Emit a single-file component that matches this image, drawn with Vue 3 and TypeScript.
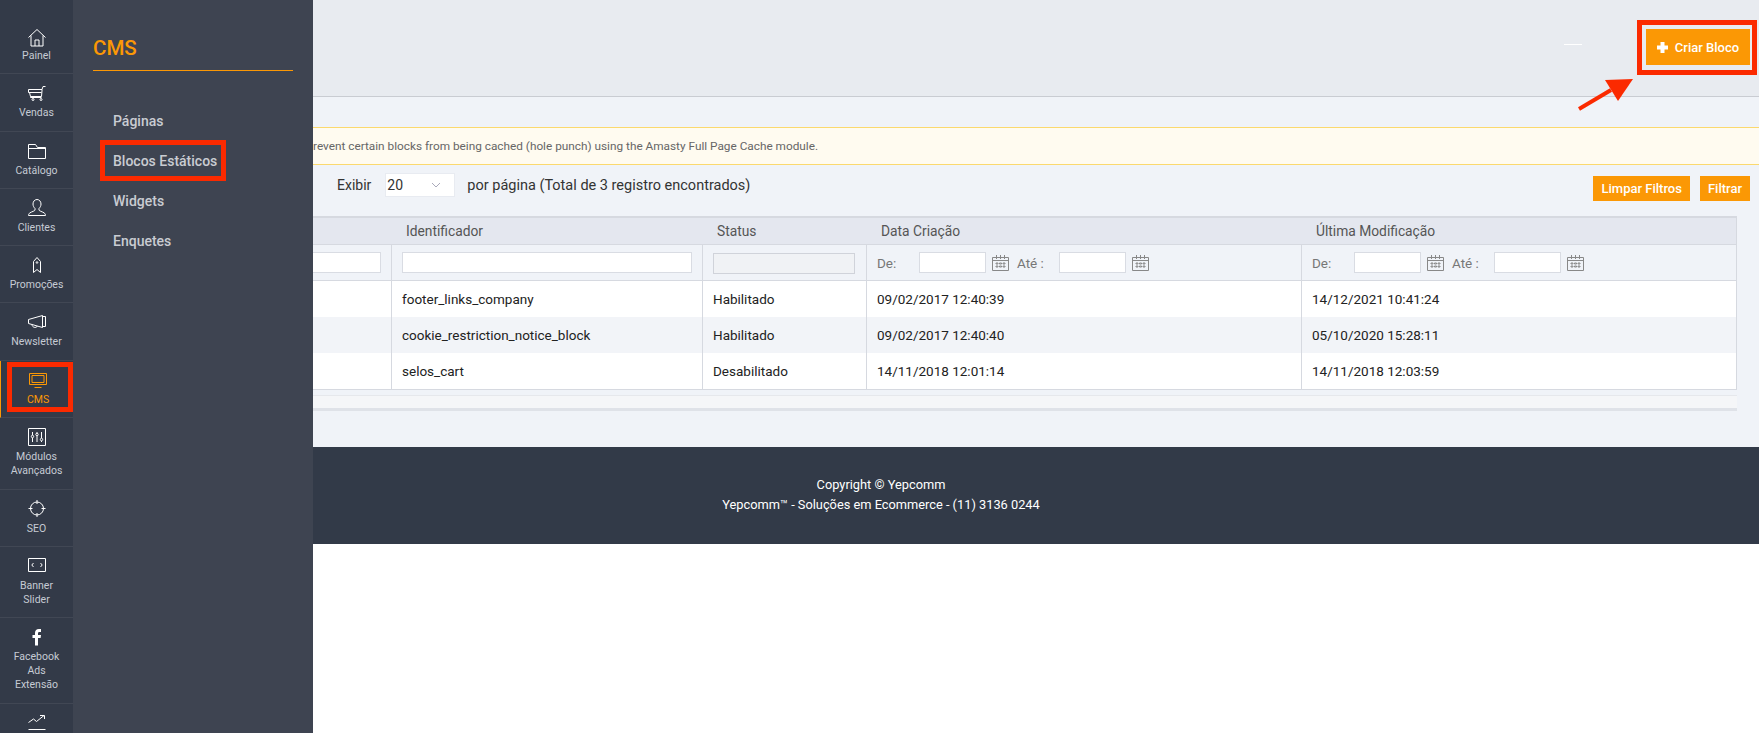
<template>
  <div class="page">
    <nav class="rail">
      <a v-for="item in railItems" :key="item.name" class="rail-item" :class="{ first: item.first, active: item.active, tall: item.tall }">
        <svg class="rail-icon" viewBox="0 0 20 20" width="20" height="20">
          <path :d="item.icon" :class="{ solid: item.solid }" />
        </svg>
        <span v-for="line in item.lines" :key="line" class="rail-label">{{ line }}</span>
      </a>
    </nav>

    <aside class="flyout">
      <h2 class="flyout-title">CMS</h2>
      <ul class="flyout-menu">
        <li v-for="m in menu" :key="m" :class="{ marked: m === 'Blocos Estáticos' }">{{ m }}</li>
      </ul>
    </aside>

    <main class="main">
      <section class="content">
        <header class="topbar">
          <span class="stub"></span>
          <button class="btn-create">
            <svg viewBox="0 0 11 11" width="11" height="11"><path d="M3.500 0h4v3.500H11v4H7.500V11h-4V7.500H0v-4h3.500z" /></svg>
            Criar Bloco
            <svg class="arrow" viewBox="0 0 56 33" width="56" height="33">
              <path class="arrow-line" d="M1 31 33 12" />
              <path class="arrow-head" d="M55 1 27 2 40 23z" />
            </svg>
          </button>
        </header>

        <div class="notice">revent certain blocks from being cached (hole punch) using the Amasty Full Page Cache module.</div>

        <div class="toolbar">
          <div class="pager">
            <span>Exibir</span>
            <div class="select">
              <span>20</span>
              <svg viewBox="0 0 10 6" width="10" height="6"><path d="M1 1l4 4 4-4" /></svg>
            </div>
            <span class="total">por página (Total de 3 registro encontrados)</span>
          </div>
          <div class="actions">
            <button class="btn">Limpar Filtros</button>
            <button class="btn">Filtrar</button>
          </div>
        </div>

        <table class="grid">
          <colgroup>
            <col style="width: 78px" />
            <col style="width: 311px" />
            <col style="width: 164px" />
            <col style="width: 435px" />
            <col />
          </colgroup>
          <thead>
            <tr class="heads">
              <th></th>
              <th>Identificador</th>
              <th>Status</th>
              <th>Data Criação</th>
              <th>Última Modificação</th>
            </tr>
            <tr class="filters">
              <td><input class="first-input" type="text" /></td>
              <td><input class="wide" type="text" /></td>
              <td><input class="wide off" type="text" disabled /></td>
              <td v-for="n in 2" :key="n">
                <div class="range">
                  <span class="de">De:</span>
                  <input class="date" type="text" />
                  <svg class="cal" viewBox="0 0 17 17" width="17" height="17"><path :d="calendar" /></svg>
                  <span class="ate">Até :</span>
                  <input class="date" type="text" />
                  <svg class="cal" viewBox="0 0 17 17" width="17" height="17"><path :d="calendar" /></svg>
                </div>
              </td>
            </tr>
          </thead>
          <tbody>
            <tr v-for="r in rows" :key="r.id" class="row">
              <td></td>
              <td>{{ r.id }}</td>
              <td>{{ r.status }}</td>
              <td>{{ r.created }}</td>
              <td>{{ r.updated }}</td>
            </tr>
          </tbody>
        </table>
        <div class="strip"></div>
      </section>

      <footer class="footer">
        <div>Copyright © Yepcomm</div>
        <div>Yepcomm™ - Soluções em Ecommerce - (11) 3136 0244</div>
      </footer>
    </main>
  </div>
</template>

<script setup lang="ts">
type RailItem = {
  name: string
  lines: string[]
  icon: string
  first?: boolean
  active?: boolean
  solid?: boolean
  tall?: boolean
}

const railItems: RailItem[] = [
  {
    name: 'painel',
    lines: ['Painel'],
    first: true,
    icon: 'M1.500 10.500 10 2.500l8.500 8M4 8.500v10.500h12V8.500M8 19v-6h4v6',
  },
  {
    name: 'vendas',
    lines: ['Vendas'],
    tall: true,
    icon: 'M18.500 2.500H16l-1 3H1.500v3h13M2.500 8.500l1 4h11l.6-7M3.500 12.500v1h11M7 15.500a1 1 0 1 1-2 0 1 1 0 0 1 2 0zM15 15.500a1 1 0 1 1-2 0 1 1 0 0 1 2 0z',
  },
  {
    name: 'catalogo',
    lines: ['Catálogo'],
    icon: 'M1.500 16.500v-14h7l2 3h8v11zM1.500 6.500h17',
  },
  {
    name: 'clientes',
    lines: ['Clientes'],
    icon: 'M10 .5c2.300 0 4 2 4 4.500 0 2-1 3.500-2 4.500v1.500c0 1 3 1.500 5 2.800 1 .7 1.500 1.500 1.500 2.700h-17c0-1.200.5-2 1.500-2.700 2-1.300 5-1.800 5-2.800V9.500c-1-1-2-2.500-2-4.500C6 2.500 7.700.5 10 .5z',
  },
  {
    name: 'promocoes',
    lines: ['Promoções'],
    icon: 'M6.500 5.500 10 1.500l3.500 4v11L10 13.500l-3.500 3zM10.800 6.500a.8.8 0 1 1-1.600 0 .8.8 0 0 1 1.600 0z',
  },
  {
    name: 'newsletter',
    lines: ['Newsletter'],
    tall: true,
    icon: 'M1.500 6.500l14-4v12l-14-4zM15.500 3.500h3v10h-3M5 11.500c0 3 4 4 5.500 1.500',
  },
  {
    name: 'cms',
    lines: ['CMS'],
    active: true,
    icon: 'M1.500 2.500h17v11h-17zM4 4.500h12v7H4zM6.500 16.500h7',
  },
  {
    name: 'modulos',
    lines: ['Módulos', 'Avançados'],
    tall: true,
    icon: 'M1.500.5h17v17h-17zM5.500 4v3M5.500 10v4M10 4v1M10 8v6M14.500 4v6M14.500 13v1M6.700 8.500a1.200 1.200 0 1 1-2.400 0 1.200 1.200 0 0 1 2.400 0zM11.200 6.500a1.200 1.200 0 1 1-2.400 0 1.200 1.200 0 0 1 2.400 0zM15.700 11.500a1.200 1.200 0 1 1-2.400 0 1.200 1.200 0 0 1 2.400 0z',
  },
  {
    name: 'seo',
    lines: ['SEO'],
    icon: 'M16.500 8.500a6.500 6.500 0 1 1-13 0 6.500 6.500 0 0 1 13 0zM10 0v4M10 13v4M1.500 8.500h4M14.500 8.500h4',
  },
  {
    name: 'banner',
    lines: ['Banner', 'Slider'],
    icon: 'M1.500 1.500h17v13h-17zM6.500 6 4.800 8l1.700 2M13.500 6l1.700 2-1.700 2',
  },
  {
    name: 'facebook',
    lines: ['Facebook', 'Ads', 'Extensão'],
    solid: true,
    tall: true,
    icon: 'M8 17.500V10H5.500V7H8V5c0-2.700 1.600-4 3.800-4 1 0 1.900.1 2.200.1V4h-1.600C11.300 4 11 4.600 11 5.500V7h3l-.4 3H11v7.500z',
  },
  {
    name: 'relatorios',
    lines: [],
    icon: 'M1.500 8.500 6.500 5l3 2.500L17 1.500M13 1.500h4.500V5M1.500 15.500h17',
  },
]

const menu = ['Páginas', 'Blocos Estáticos', 'Widgets', 'Enquetes']

const rows = [
  { id: 'footer_links_company', status: 'Habilitado', created: '09/02/2017 12:40:39', updated: '14/12/2021 10:41:24' },
  { id: 'cookie_restriction_notice_block', status: 'Habilitado', created: '09/02/2017 12:40:40', updated: '05/10/2020 15:28:11' },
  { id: 'selos_cart', status: 'Desabilitado', created: '14/11/2018 12:01:14', updated: '14/11/2018 12:03:59' },
]

const calendar =
  'M.5 3.500h16v13H.5zM.5 6.500h16M4.500 1v4M8.500 1v4M12.500 1v4M4 9h2v1H4zM7.500 9h2v1h-2zM11 9h2v1h-2zM4 12h2v1H4zM7.500 12h2v1h-2zM11 12h2v1h-2z'
</script>

<style>
html,
body {
  margin: 0;
  background: #fff;
}
</style>

<style scoped>
.page {
  display: flex;
  height: 733px;
  overflow: hidden;
  font-family: Roboto, "Liberation Sans", sans-serif;
  font-size: 13px;
  background: #fff;
}

/* left icon rail */
.rail {
  width: 73px;
  flex: none;
  background: #333a48;
  display: flex;
  flex-direction: column;
}
.rail-item {
  position: relative;
  flex: none;
  display: flex;
  flex-direction: column;
  align-items: center;
  padding: 10px 0 10px;
  border-bottom: 1px solid #414754;
  color: #c6cbd4;
  font-size: 10.5px;
  line-height: 14px;
}
.rail-item.first {
  padding-top: 27px;
}
.rail-item.tall {
  padding-bottom: 11px;
}
.rail-icon {
  display: block;
  margin-bottom: 2px;
}
.rail-icon path {
  fill: none;
  stroke: #fff;
  stroke-width: 1;
}
.rail-icon path.solid {
  fill: #fff;
  stroke: none;
}
.rail-label {
  display: block;
  white-space: nowrap;
}
.rail-item.active {
  color: #fb9805;
  padding-left: 2px;
  border-left: 1px solid #fb9805;
}
.rail-item.active .rail-icon path {
  stroke: #fb9805;
}
.rail-item.active::after {
  content: "";
  position: absolute;
  left: 6px;
  right: 0;
  top: 1px;
  height: 50px;
  box-sizing: border-box;
  border: 5px solid #fb2a00;
}

/* flyout */
.flyout {
  width: 240px;
  flex: none;
  box-sizing: border-box;
  padding: 0 20px;
  background: #3e4451;
}
.flyout-title {
  margin: 0;
  height: 70px;
  border-bottom: 1px solid #fb9805;
  color: #fb9805;
  font-size: 20.5px;
  font-weight: 500;
  line-height: 96px;
}
.flyout-menu {
  list-style: none;
  margin: 30px 0 0;
  padding: 0 0 0 20px;
  color: #c9ccd2;
  font-size: 14px;
  font-weight: 500;
}
.flyout-menu li {
  position: relative;
  height: 40px;
  line-height: 40px;
}
.flyout-menu li.marked::after {
  content: "";
  position: absolute;
  left: -13px;
  top: -1px;
  width: 126px;
  height: 41px;
  box-sizing: border-box;
  border: 5px solid #fb2a00;
}

/* main column */
.main {
  flex: 1;
  min-width: 0;
  background: #fff;
  display: flex;
  flex-direction: column;
}
.content {
  height: 447px;
  flex: none;
  background: #f0f3f8;
  display: flex;
  flex-direction: column;
}
.topbar {
  height: 96px;
  flex: none;
  background: #e8ebf0;
  border-bottom: 1px solid #c9ccd2;
  display: flex;
  justify-content: flex-end;
  align-items: flex-start;
  padding-right: 9px;
}
.stub {
  width: 18px;
  height: 1px;
  margin: 44px 64px 0 0;
  background: #fff;
}
.btn-create {
  position: relative;
  margin-top: 29px;
  width: 104px;
  height: 36px;
  border: 0;
  padding: 0;
  background: #fb9805;
  color: #fff;
  font: 500 13px Roboto, sans-serif;
  display: flex;
  align-items: center;
  justify-content: center;
  gap: 7px;
}
.btn-create svg path {
  fill: #fff;
}
.btn-create::after {
  content: "";
  position: absolute;
  left: -9px;
  right: -7px;
  top: -9px;
  bottom: -10px;
  border: 5px solid #fb2a00;
}
.arrow {
  position: absolute;
  left: -68px;
  top: 49px;
  z-index: 1;
}
.btn-create svg.arrow path.arrow-line {
  fill: none;
  stroke: #fb2a00;
  stroke-width: 4;
}
.btn-create svg.arrow path.arrow-head {
  fill: #fb2a00;
}
.notice {
  margin-top: 30px;
  height: 36px;
  flex: none;
  background: #fffbf0;
  border-top: 1px solid #fbd96e;
  border-bottom: 1px solid #fbd96e;
  color: #666;
  font-size: 11.8px;
  line-height: 36px;
  white-space: nowrap;
}
.toolbar {
  height: 51px;
  flex: none;
  display: flex;
  justify-content: space-between;
  align-items: flex-start;
  padding: 0 9px 0 24px;
}
.pager {
  display: flex;
  align-items: center;
  gap: 14px;
  margin-top: 8px;
  height: 24px;
  color: #333;
  font-size: 14px;
}
.total {
  font-size: 14.5px;
  margin-left: -2px;
}
.select {
  width: 70px;
  height: 24px;
  box-sizing: border-box;
  background: #fff;
  border: 1px solid #e8ebf1;
  display: flex;
  align-items: center;
  justify-content: space-between;
  padding: 0 13px 0 1px;
}
.select path {
  fill: none;
  stroke: #aab;
}
.actions {
  display: flex;
  gap: 10px;
  margin-top: 11px;
}
.btn {
  height: 25px;
  border: 0;
  padding: 0 8px;
  background: #fb9805;
  color: #fff;
  font: 500 13px Roboto, sans-serif;
}
.grid {
  width: 1424px;
  flex: none;
  table-layout: fixed;
  border-collapse: separate;
  border-spacing: 0;
  border-top: 2px solid #d6d9e0;
  border-right: 1px solid #d6d9e0;
  color: #222;
  font-size: 13.5px;
}
.grid th {
  height: 26px;
  padding: 0 0 0 15px;
  text-align: left;
  font-weight: 400;
  font-size: 13.8px;
  color: #555;
  background: #e4e7ef;
  border-bottom: 1px solid #d6d9e0;
}
.filters td {
  height: 35px;
  padding: 0 0 0 10px;
  background: #f0f3f8;
  border-left: 1px solid #d6d9e0;
  border-bottom: 1px solid #d6d9e0;
}
.filters td:first-child {
  padding-left: 0;
  border-left: 0;
}
input {
  display: block;
  box-sizing: border-box;
  height: 21px;
  background: #fff;
  border: 1px solid #d9dce3;
  outline: none;
  padding: 0;
}
.first-input {
  width: 68px;
  border-left: 0;
}
.wide {
  width: 290px;
}
.wide.off {
  width: 142px;
  margin-top: 1px;
  background: #f0f2f5;
  border-color: #d0d3da;
}
.range {
  display: flex;
  align-items: center;
  color: #777;
}
.de {
  width: 42px;
}
.date {
  width: 67px;
}
.cal {
  margin: 0 8px 0 6px;
}
.cal path {
  fill: none;
  stroke: #888;
  stroke-width: 1;
}
.ate {
  width: 42px;
}
.row td {
  height: 36px;
  padding: 0 0 0 10px;
  border-left: 1px solid #d6d9e0;
  background: #fff;
}
.row td:first-child {
  border-left: 0;
}
.row:nth-child(even) td {
  background: #f2f4f8;
}
.row:last-child td {
  border-bottom: 1px solid #d6d9e0;
}
.strip {
  width: 1424px;
  height: 12px;
  flex: none;
  margin-top: 5px;
  background: #f5f6f8;
  border-top: 1px solid #e6e8ec;
  border-bottom: 3px solid #dfe2e8;
}
.footer {
  height: 97px;
  flex: none;
  box-sizing: border-box;
  padding: 28px 310px 0 0;
  background: #323a48;
  color: #fff;
  text-align: center;
  font-size: 12.8px;
  line-height: 20px;
}
</style>
